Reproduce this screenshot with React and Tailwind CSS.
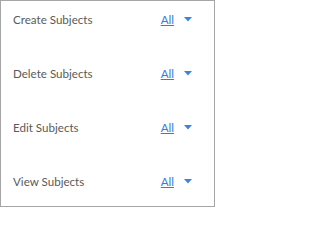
import React from 'react';

const rows = ['Create Subjects', 'Delete Subjects', 'Edit Subjects', 'View Subjects'];

const App = () => {
  return (
    <div className="w-[215px] h-[207px] border border-[#a6a6a6] bg-white pt-[7px] pl-[12px] pr-[22px] flex flex-col gap-[30px]" style={{ fontFamily: 'Lato, sans-serif' }}>
      {rows.map((label) => (
        <div key={label} className="h-[24px] flex items-center justify-between">
          <span className="text-[11.6px] text-[#5a5a5a]">{label}</span>
          <div className="flex items-center">
            <a href="#" className="text-[11.6px] text-[#2f7fe0] underline">All</a>
            {/* dropdown caret */}
            <svg width="8" height="5" viewBox="0 0 8 5" className="ml-[10px]">
              <path d="M0 0H8L4 4.5Z" fill="#3b82e6" />
            </svg>
          </div>
        </div>
      ))}
    </div>
  );
};

export default App;
